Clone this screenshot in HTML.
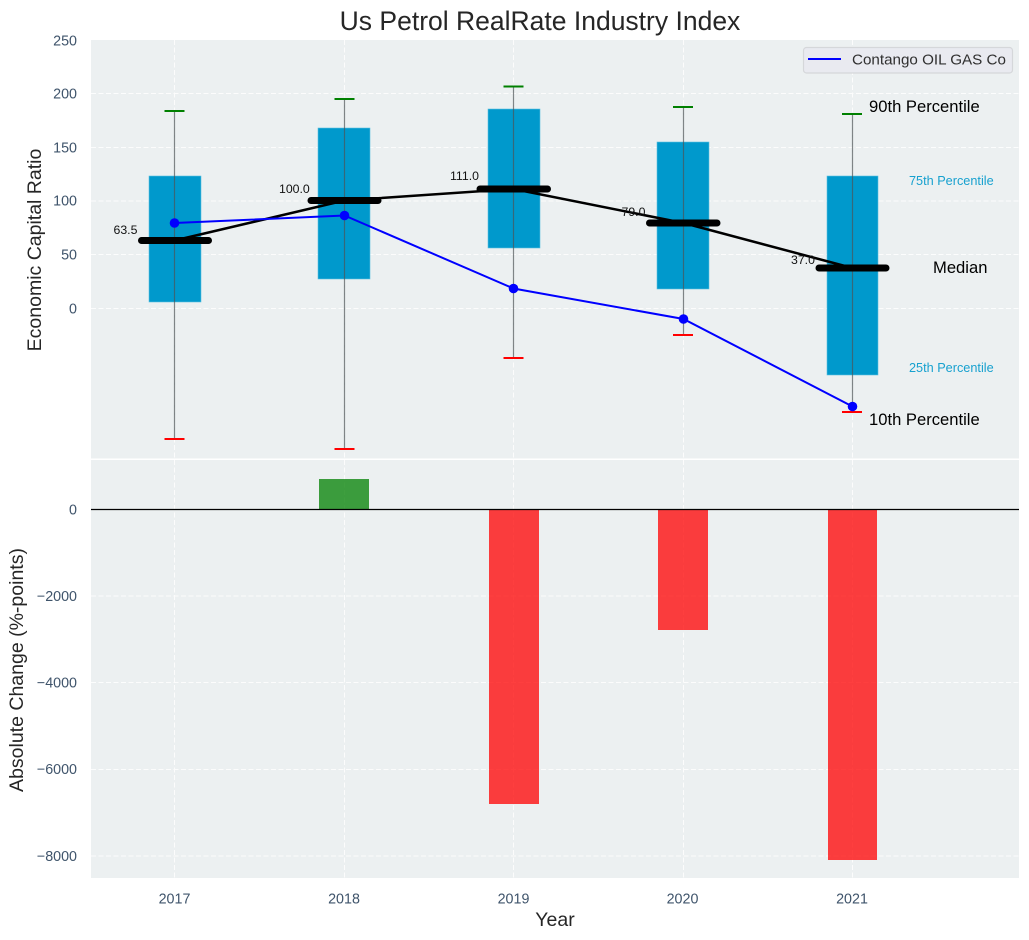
<!DOCTYPE html>
<html><head><meta charset="utf-8"><style>
html,body{margin:0;padding:0;background:#fff;width:1029px;height:940px;overflow:hidden}
svg{display:block}
text{font-family:"Liberation Sans",Arial,sans-serif}
.t{fill:#3f546b;font-size:14.300px}
.g{stroke:#fff;stroke-width:1;stroke-dasharray:5 2.5;opacity:.85;fill:none}
.w{stroke:#4d5457;stroke-width:1.200;opacity:.7}
.m{stroke:#000;stroke-width:7;stroke-linecap:round}
.b{fill:#0099cc;stroke:#5cc0e0;stroke-width:.6}
.v{font-size:12.300px;fill:#111}
.p{font-size:16.600px;fill:#000}
.s{font-size:12.700px;fill:#0099cc;opacity:.9}
</style></head><body>
<svg width="1029" height="940" viewBox="0 0 1029 940" xmlns="http://www.w3.org/2000/svg">
<rect x="91" y="40" width="928" height="418.500" fill="#ecf0f1"/>
<rect x="91" y="460" width="928" height="418" fill="#ecf0f1"/>

<!-- gridlines -->
<g class="g">
<path d="M91 93.500H1019M91 147.500H1019M91 201H1019M91 254.500H1019M91 308.500H1019"/>
<path d="M91 596H1019M91 682.500H1019M91 769.500H1019M91 856H1019"/>
<path d="M174.500 40V458M344.500 40V458M513.500 40V458M683.500 40V458M852.500 40V458"/>
<path d="M174.500 460V878M344.500 460V878M513.500 460V878M683.500 460V878M852.500 460V878"/>
</g>

<!-- boxes -->
<rect class="b" x="149" y="176" width="52" height="126"/>
<rect class="b" x="318" y="128" width="52" height="151"/>
<rect class="b" x="488" y="109" width="52" height="139"/>
<rect class="b" x="657" y="142" width="52" height="147"/>
<rect class="b" x="827" y="176" width="51" height="199"/>

<!-- whiskers -->
<path class="w" d="M174.500 111V439M344.500 99V449M513.500 86.500V358M683.500 107V335M852.500 114V412"/>
<g stroke="#008000" stroke-width="2">
<path d="M164.500 111H184.500M334.500 99H354.500M503.500 86.500H523.500M673 107H693M842 114H862"/>
</g>
<g stroke="#ff0000" stroke-width="2">
<path d="M164.500 439H184.500M334.500 449H354.500M503.500 358H523.500M673 335H693M842 412H862"/>
</g>

<!-- median line -->
<polyline points="174.500,240.500 344.500,200.500 513.500,189 683.500,223 852.500,268" fill="none" stroke="#000" stroke-width="2.500"/>
<path class="m" d="M141.500 240.500H208.500M311 200.500H378M480 189H547.500M649.500 223H717M819 268H886"/>

<!-- blue series -->
<polyline points="174.500,223 344.500,215.500 513.500,288.500 683.500,319 852.500,406.500" fill="none" stroke="#0000ff" stroke-width="2"/>
<g fill="#0000ff">
<circle cx="174.500" cy="223" r="4.800"/><circle cx="344.500" cy="215.500" r="4.800"/><circle cx="513.500" cy="288.500" r="4.800"/><circle cx="683.500" cy="319" r="4.800"/><circle cx="852.500" cy="406.500" r="4.800"/>
</g>

<!-- value labels -->
<text class="v" x="113.500" y="234">63.5</text>
<text class="v" x="279" y="193">100.0</text>
<text class="v" x="450" y="180">111.0</text>
<text class="v" x="621.500" y="216">79.0</text>
<text class="v" x="791" y="264">37.0</text>

<!-- annotations -->
<text class="p" x="869" y="112">90th Percentile</text>
<text class="s" x="909" y="185">75th Percentile</text>
<text class="p" x="933" y="273">Median</text>
<text class="s" x="909" y="372">25th Percentile</text>
<text class="p" x="869" y="425">10th Percentile</text>

<!-- legend -->
<rect x="803.500" y="47.500" width="209" height="25.500" rx="3" fill="#e9eaf0" stroke="#d5d7da" stroke-width="1.200"/>
<path d="M808 59H841" stroke="#0000ff" stroke-width="2"/>
<text x="852" y="64.500" font-size="15.200" fill="#303030">Contango OIL GAS Co</text>

<!-- bars -->
<rect x="319" y="479" width="50" height="30.500" fill="#008000" opacity=".75"/>
<rect x="489" y="509.500" width="50" height="294.500" fill="#ff0000" opacity=".75"/>
<rect x="658" y="509.500" width="50" height="120.500" fill="#ff0000" opacity=".75"/>
<rect x="828" y="509.500" width="49" height="350.500" fill="#ff0000" opacity=".75"/>
<path d="M91 509.500H1019" stroke="#000" stroke-width="1.300"/>

<!-- y ticks -->
<g class="t" text-anchor="end">
<text x="77" y="45.500">250</text>
<text x="77" y="98.500">200</text>
<text x="77" y="152.500">150</text>
<text x="77" y="205.500">100</text>
<text x="77" y="259.500">50</text>
<text x="77" y="313.500">0</text>
<text x="77" y="514.500">0</text>
<text x="77" y="601">−2000</text>
<text x="77" y="687.500">−4000</text>
<text x="77" y="774">−6000</text>
<text x="77" y="861">−8000</text>
</g>

<!-- x ticks -->
<g class="t" text-anchor="middle">
<text x="174.500" y="903.500">2017</text>
<text x="344" y="903.500">2018</text>
<text x="513.500" y="903.500">2019</text>
<text x="682.500" y="903.500">2020</text>
<text x="852" y="903.500">2021</text>
</g>

<!-- titles -->
<text x="540" y="30" font-size="26.500" fill="#262626" text-anchor="middle">Us Petrol RealRate Industry Index</text>
<text x="555" y="926" font-size="19.500" fill="#262626" text-anchor="middle">Year</text>
<text transform="translate(41 250) rotate(-90)" font-size="19.500" fill="#262626" text-anchor="middle">Economic Capital Ratio</text>
<text transform="translate(23 670) rotate(-90)" font-size="19.500" fill="#262626" text-anchor="middle">Absolute Change (%-points)</text>
</svg>
</body></html>
